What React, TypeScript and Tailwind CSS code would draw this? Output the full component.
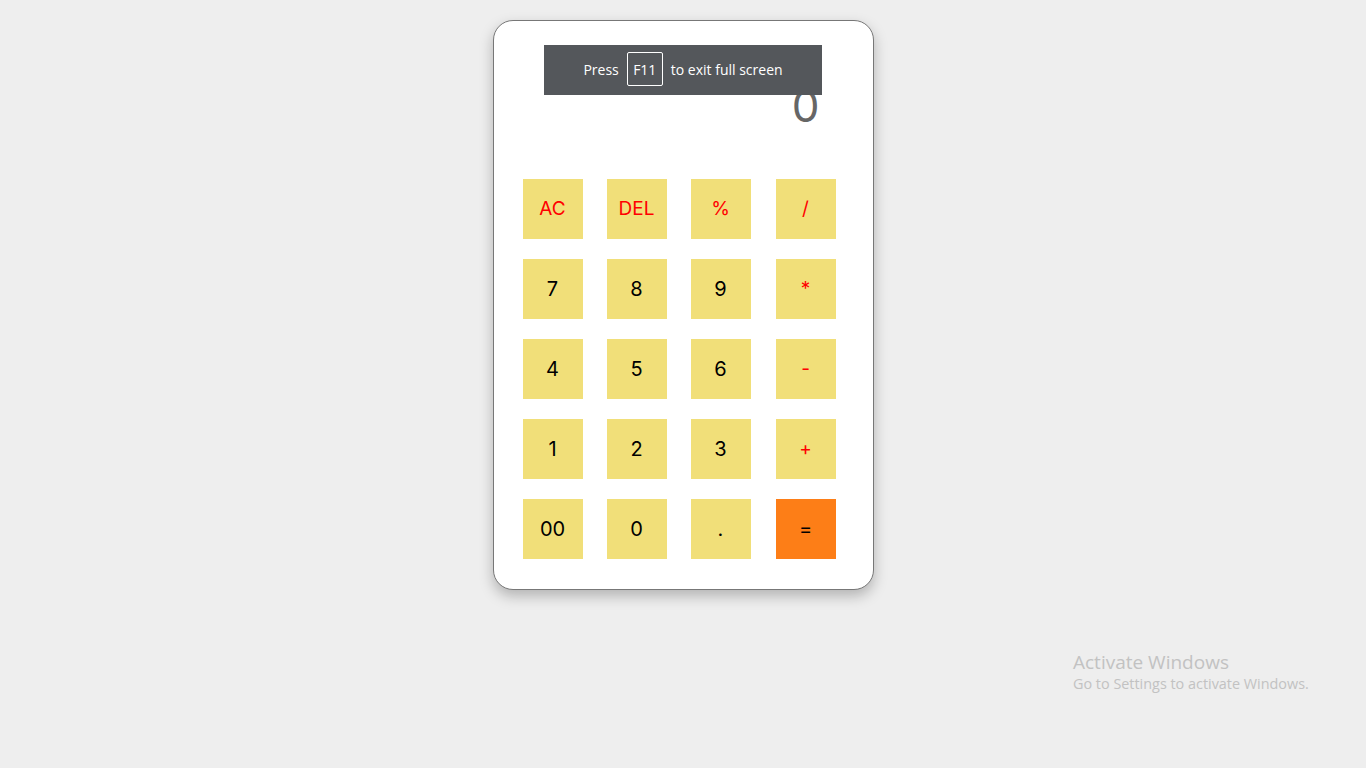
const keys: { label: string; tone: "num" | "op" | "eq" }[] = [
  { label: "AC", tone: "op" },
  { label: "DEL", tone: "op" },
  { label: "%", tone: "op" },
  { label: "/", tone: "op" },
  { label: "7", tone: "num" },
  { label: "8", tone: "num" },
  { label: "9", tone: "num" },
  { label: "*", tone: "op" },
  { label: "4", tone: "num" },
  { label: "5", tone: "num" },
  { label: "6", tone: "num" },
  { label: "-", tone: "op" },
  { label: "1", tone: "num" },
  { label: "2", tone: "num" },
  { label: "3", tone: "num" },
  { label: "+", tone: "op" },
  { label: "00", tone: "num" },
  { label: "0", tone: "num" },
  { label: ".", tone: "num" },
  { label: "=", tone: "eq" },
];

export default function App() {
  return (
    <div className="relative min-h-[768px] w-full bg-[#eeeeee] font-['Inter',sans-serif]">
      {/* Calculator card */}
      <div className="flex justify-center pt-[20px]">
        <div className="w-[381px] h-[570px] bg-white border border-[#777] rounded-[20px] shadow-[0_6px_14px_rgba(0,0,0,0.25)] flex flex-col px-[29px] pb-[29px]">
          {/* Display */}
          <div className="h-[158px] flex justify-end pt-[63px] pr-[24px]">
            <span className="text-[44px] leading-none text-[#666]">0</span>
          </div>

          {/* Keys */}
          <div className="grid grid-cols-[84px_84px_85px_60px] gap-y-[20px]">
            {keys.map((k) => (
              <button
                key={k.label}
                className={
                  k.tone === "eq"
                    ? "w-[60px] h-[60px] bg-[#fd7e17] text-black text-[20px] flex items-center justify-center"
                    : k.tone === "op"
                    ? "w-[60px] h-[60px] bg-[#f1df79] text-[#ff0000] text-[19px] flex items-center justify-center"
                    : "w-[60px] h-[60px] bg-[#f1df79] text-black text-[20px] flex items-center justify-center"
                }
              >
                {k.label}
              </button>
            ))}
          </div>
        </div>
      </div>

      {/* Full screen notice */}
      <div className="absolute top-[45px] left-1/2 -translate-x-1/2 w-[278px] h-[50px] pb-[2px] bg-[#54575b] flex items-center justify-center gap-[8px] text-white text-[14px] font-['Open_Sans',sans-serif]">
        <span>Press</span>
        <span className="h-[34px] w-[36px] border border-white rounded-[2px] flex items-center justify-center">F11</span>
        <span>to exit full screen</span>
      </div>

      {/* Windows watermark */}
      <div className="absolute left-[1073px] top-[650px] text-[#c2c2c2] font-['Open_Sans',sans-serif]">
        <div className="text-[19px] leading-[24px]">Activate Windows</div>
        <div className="text-[14.4px] leading-[20px]">Go to Settings to activate Windows.</div>
      </div>
    </div>
  );
}
